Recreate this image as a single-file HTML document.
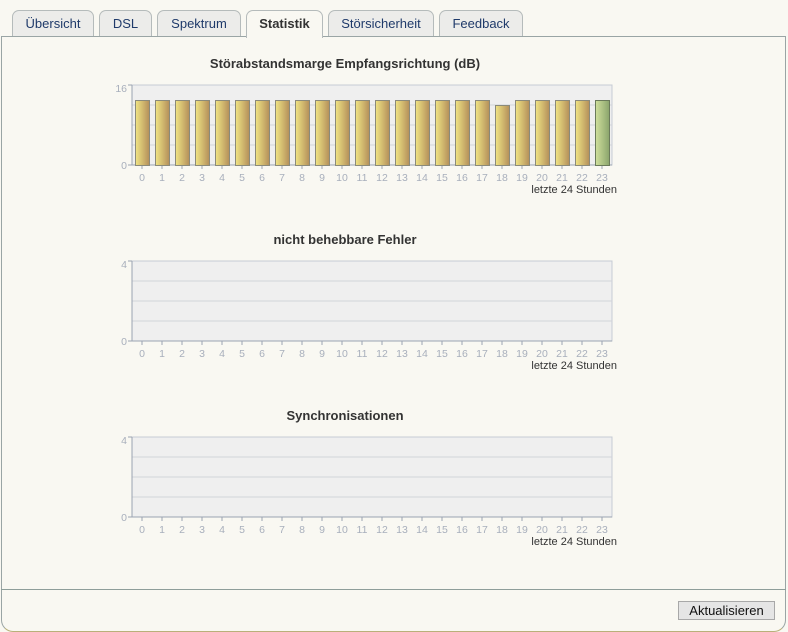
<!DOCTYPE html>
<html><head><meta charset="utf-8"><style>
body{margin:0;width:788px;height:632px;background:#fff;font-family:"Liberation Sans",Arial,sans-serif;overflow:hidden}
.wrap{position:absolute;left:0;top:0;width:788px;height:632px;background:#f9f8f2}
.box{position:absolute;left:1px;top:36px;width:785px;height:596px;border-left:1px solid #9aa5a5;border-right:1px solid #9aa5a5;border-top:1px solid #9aa5a5;border-bottom:1px solid #b9b07a;border-radius:0 0 12px 12px;box-sizing:border-box}
.tab{position:absolute;top:10px;height:26px;background:#ececea;border:1px solid #b5bbbb;border-bottom:none;border-radius:7px 7px 0 0;box-sizing:border-box;font-size:13px;color:#1f3a6a;text-align:center;line-height:25px}
.tab.act{background:#f9f8f2;color:#333;font-weight:bold;height:28px;z-index:2}
.sep{position:absolute;left:1px;top:589px;width:785px;height:1px;background:#8e9e9a}
.btn{position:absolute;left:678px;top:601px;width:97px;height:19px;background:#e5e5e5;border:1px solid #a8a8a8;box-sizing:border-box;font-size:13px;text-align:center;line-height:17px;color:#111}
svg{position:absolute;left:0;top:0}
</style></head><body><div class="wrap">
<div class="box"></div>
<div class="tab" style="left:12px;width:82px">Übersicht</div>
<div class="tab" style="left:99px;width:53px">DSL</div>
<div class="tab" style="left:157px;width:84px">Spektrum</div>
<div class="tab act" style="left:246px;width:77px">Statistik</div>
<div class="tab" style="left:328px;width:106px">Störsicherheit</div>
<div class="tab" style="left:439px;width:84px">Feedback</div>
<div class="sep"></div>
<div class="btn">Aktualisieren</div>
<svg width="788" height="632" font-family="Liberation Sans, Arial, sans-serif">
<defs>
<linearGradient id="y" x1="0" x2="1"><stop offset="0" stop-color="#f0e484"/><stop offset="1" stop-color="#b48f5a"/></linearGradient>
<linearGradient id="g" x1="0" x2="1"><stop offset="0" stop-color="#d0e09c"/><stop offset="1" stop-color="#8aa46c"/></linearGradient>
<g id="plot">
<rect x="132" y="0" width="480" height="80" fill="#efefef" stroke="#c6cbd4"/>
<path d="M132 20H612M132 40H612M132 60H612" stroke="#d2d4da"/>
<path d="M132 0V80H612M128 0H132M128 80H132" stroke="#9aa3b2" fill="none"/>
<path d="M142 80v4M162 80v4M182 80v4M202 80v4M222 80v4M242 80v4M262 80v4M282 80v4M302 80v4M322 80v4M342 80v4M362 80v4M382 80v4M402 80v4M422 80v4M442 80v4M462 80v4M482 80v4M502 80v4M522 80v4M542 80v4M562 80v4M582 80v4M602 80v4" stroke="#9aa3b2"/>
</g>
<g id="lab" font-size="10.5" fill="#a8afbc" text-anchor="middle">
<text x="142" y="0">0</text><text x="162" y="0">1</text><text x="182" y="0">2</text><text x="202" y="0">3</text><text x="222" y="0">4</text><text x="242" y="0">5</text><text x="262" y="0">6</text><text x="282" y="0">7</text><text x="302" y="0">8</text><text x="322" y="0">9</text><text x="342" y="0">10</text><text x="362" y="0">11</text><text x="382" y="0">12</text><text x="402" y="0">13</text><text x="422" y="0">14</text><text x="442" y="0">15</text><text x="462" y="0">16</text><text x="482" y="0">17</text><text x="502" y="0">18</text><text x="522" y="0">19</text><text x="542" y="0">20</text><text x="562" y="0">21</text><text x="582" y="0">22</text><text x="602" y="0">23</text>
</g>
</defs>
<g font-weight="bold" font-size="13" fill="#333" text-anchor="middle">
<text x="345" y="68">Störabstandsmarge Empfangsrichtung (dB)</text>
<text x="345" y="244">nicht behebbare Fehler</text>
<text x="345" y="420">Synchronisationen</text>
</g>
<use href="#plot" transform="translate(0,85)"/>
<use href="#plot" transform="translate(0,261)"/>
<use href="#plot" transform="translate(0,437)"/>
<g stroke="#8a8a7a" stroke-width="1">
<rect x="135.5" y="100.5" width="14" height="65" fill="url(#y)"/><rect x="155.5" y="100.5" width="14" height="65" fill="url(#y)"/><rect x="175.5" y="100.5" width="14" height="65" fill="url(#y)"/><rect x="195.5" y="100.5" width="14" height="65" fill="url(#y)"/><rect x="215.5" y="100.5" width="14" height="65" fill="url(#y)"/><rect x="235.5" y="100.5" width="14" height="65" fill="url(#y)"/><rect x="255.5" y="100.5" width="14" height="65" fill="url(#y)"/><rect x="275.5" y="100.5" width="14" height="65" fill="url(#y)"/><rect x="295.5" y="100.5" width="14" height="65" fill="url(#y)"/><rect x="315.5" y="100.5" width="14" height="65" fill="url(#y)"/><rect x="335.5" y="100.5" width="14" height="65" fill="url(#y)"/><rect x="355.5" y="100.5" width="14" height="65" fill="url(#y)"/><rect x="375.5" y="100.5" width="14" height="65" fill="url(#y)"/><rect x="395.5" y="100.5" width="14" height="65" fill="url(#y)"/><rect x="415.5" y="100.5" width="14" height="65" fill="url(#y)"/><rect x="435.5" y="100.5" width="14" height="65" fill="url(#y)"/><rect x="455.5" y="100.5" width="14" height="65" fill="url(#y)"/><rect x="475.5" y="100.5" width="14" height="65" fill="url(#y)"/><rect x="495.5" y="105.5" width="14" height="60" fill="url(#y)"/><rect x="515.5" y="100.5" width="14" height="65" fill="url(#y)"/><rect x="535.5" y="100.5" width="14" height="65" fill="url(#y)"/><rect x="555.5" y="100.5" width="14" height="65" fill="url(#y)"/><rect x="575.5" y="100.5" width="14" height="65" fill="url(#y)"/>
<rect x="595.5" y="100.5" width="14" height="65" fill="url(#g)" stroke="#6a7a5a"/>
</g>
<use href="#lab" transform="translate(0,181)"/>
<use href="#lab" transform="translate(0,357)"/>
<use href="#lab" transform="translate(0,533)"/>
<g font-size="10.5" fill="#a8afbc" text-anchor="end">
<text x="127" y="92">16</text><text x="127" y="169">0</text>
<text x="127" y="268">4</text><text x="127" y="345">0</text>
<text x="127" y="444">4</text><text x="127" y="521">0</text>
</g>
<g font-size="11" fill="#333" text-anchor="end">
<text x="617" y="193">letzte 24 Stunden</text>
<text x="617" y="369">letzte 24 Stunden</text>
<text x="617" y="545">letzte 24 Stunden</text>
</g>
</svg>
</div></body></html>
